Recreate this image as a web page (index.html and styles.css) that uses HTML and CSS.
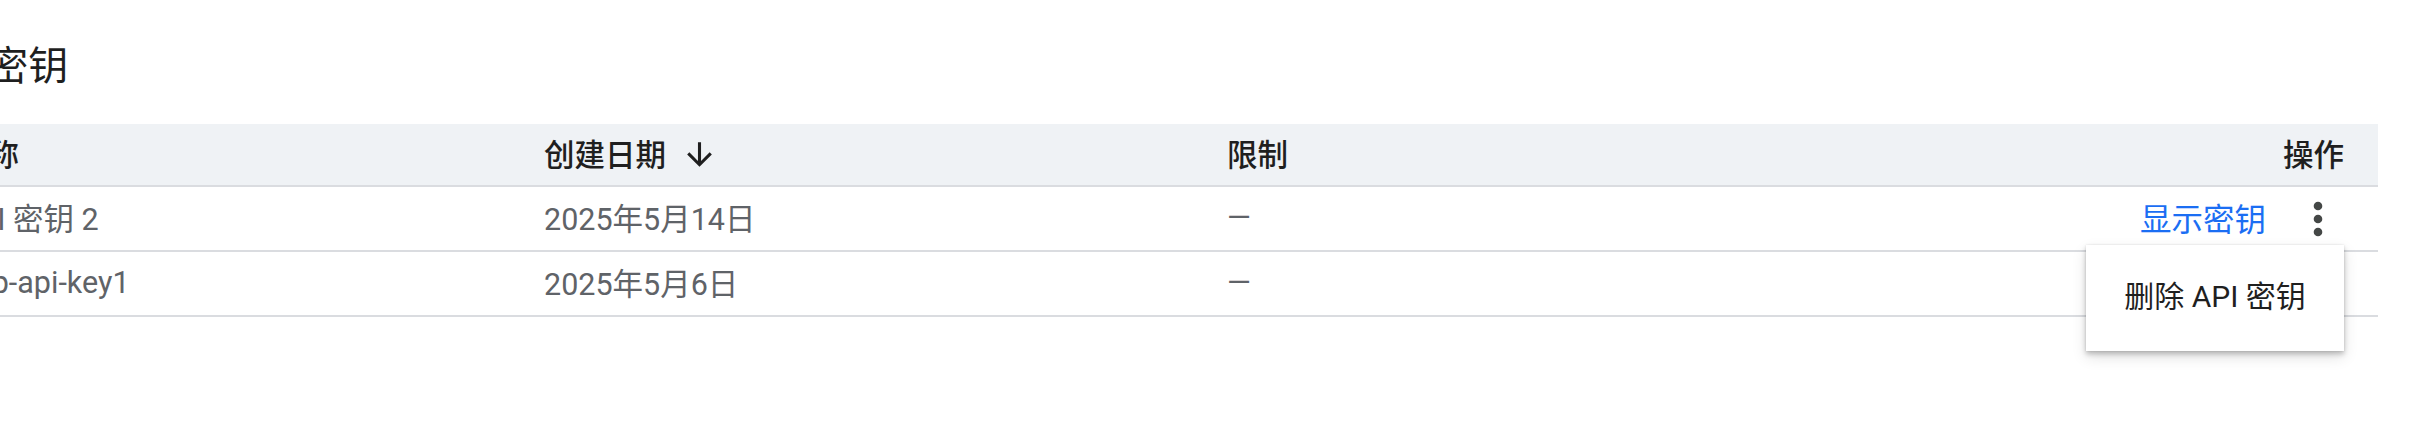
FILE: index.html
```html
<!DOCTYPE html>
<html lang="zh-CN">
<head>
<meta charset="utf-8">
<title>API 密钥</title>
<link rel="stylesheet" href="styles.css">
</head>
<body>
<div class="page">
  <h1 class="title">API 密钥</h1>
  <div class="table">
    <div class="row head">
      <div class="cell name">名称</div>
      <div class="cell date">创建日期
        <svg class="sort" viewBox="0 0 24 24" width="37" height="37"><path d="M20 12l-1.41-1.41L13 16.17V4h-2v12.17l-5.58-5.59L4 12l8 8 8-8z" fill="#1f1f1f"/></svg>
      </div>
      <div class="cell limit">限制</div>
      <div class="cell actions">操作</div>
    </div>
    <div class="row">
      <div class="cell name">API 密钥 2</div>
      <div class="cell date">2025年5月14日</div>
      <div class="cell limit">—</div>
      <div class="cell actions">
        <a class="link">显示密钥</a>
        <button class="more" aria-label="更多">
          <svg viewBox="0 0 52 52" width="52" height="52"><circle cx="26" cy="13" r="4.3" fill="#444746"/><circle cx="26" cy="26" r="4.3" fill="#444746"/><circle cx="26" cy="39" r="4.3" fill="#444746"/></svg>
        </button>
        <div class="menu">删除 API 密钥</div>
      </div>
    </div>
    <div class="row">
      <div class="cell name">app-api-key1</div>
      <div class="cell date">2025年5月6日</div>
      <div class="cell limit">—</div>
      <div class="cell actions"></div>
    </div>
  </div>
</div>
</body>
</html>
```

FILE: styles.css
```css
html {
  overflow: hidden;
  background: #ffffff;
  height: 100%;
}

body {
  margin: 0;
  padding: 0;
  min-height: 100%;
  font-family: Roboto, "Noto Sans CJK SC", sans-serif;
  color: #1f1f1f;
}

.page {
  margin-left: -84px;
  width: 2462px;
  min-height: 424px;
}

.title {
  margin: 0;
  padding: 39px 0 29px 0;
  font-size: 40px;
  line-height: 56px;
  font-weight: 400;
  color: #1f1f1f;
}

.table {
  display: flex;
  flex-direction: column;
}

.row {
  display: grid;
  grid-template-columns: 586px 683px 1fr auto;
  height: 63px;
  box-sizing: content-box;
  border-bottom: 2px solid #dadce0;
  font-size: 30.5px;
  color: #5f6368;
}

.row.head {
  height: 61px;
  background: #eff2f5;
  color: #1f1f1f;
  font-weight: 500;
  font-size: 30.5px;
}

.cell {
  display: flex;
  align-items: center;
  padding-left: 42px;
  padding-bottom: 3px;
  box-sizing: border-box;
  white-space: nowrap;
}

.sort {
  margin-left: 15px;
  margin-top: 3px;
}

.cell.actions {
  position: relative;
  justify-content: flex-end;
  padding-left: 0;
  padding-right: 34px;
}

.link {
  color: #1b6ef3;
  cursor: pointer;
  font-size: 31.5px;
  margin-right: 26px;
}

.more {
  width: 52px;
  height: 52px;
  padding: 0;
  border: 0;
  margin-top: 3px;
  background: none;
  display: flex;
}

.menu {
  position: absolute;
  top: 58px;
  right: 34px;
  width: 258px;
  height: 106px;
  box-sizing: border-box;
  padding: 0 37px 8px;
  display: flex;
  align-items: center;
  justify-content: center;
  background: #ffffff;
  color: #1f1f1f;
  font-weight: 400;
  font-size: 30px;
  box-shadow: 0 3px 5px rgba(0, 0, 0, 0.22), 0 6px 14px rgba(0, 0, 0, 0.12), 0 0 2px rgba(0, 0, 0, 0.1);
  z-index: 2;
}
```
